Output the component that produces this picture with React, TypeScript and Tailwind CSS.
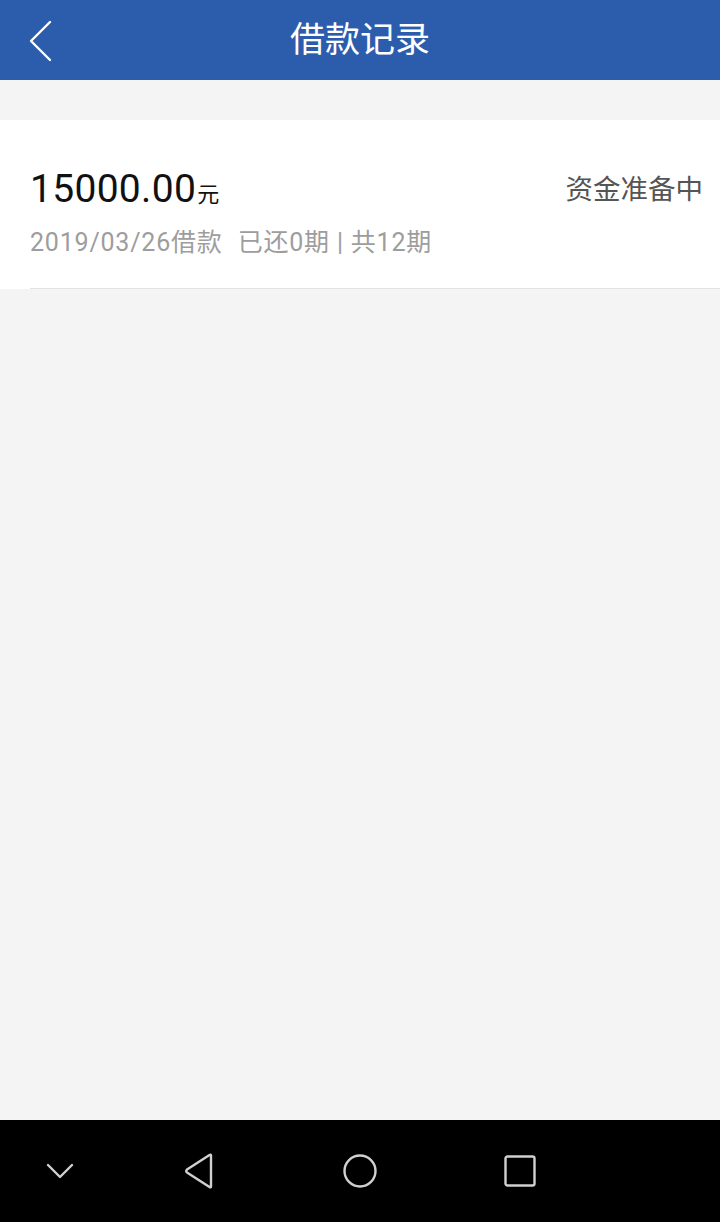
import React from "react";

const font = { fontFamily: 'Roboto, "Noto Sans CJK SC", sans-serif' };

function BackIcon() {
  return (
    <svg width="30" height="44" viewBox="0 0 30 44" fill="none">
      <polyline points="21,3 2,22 21,41" stroke="#fff" strokeWidth="2.4" strokeLinecap="round" strokeLinejoin="round" />
    </svg>
  );
}

function NavBar() {
  return (
    <div className="flex h-[102px] w-full items-center bg-black">
      <div className="flex w-[120px] justify-center">
        <svg width="28" height="18" viewBox="0 0 28 18" fill="none">
          <polyline points="2,3 14,15 26,3" stroke="#d0d0d0" strokeWidth="2.4" strokeLinecap="round" strokeLinejoin="round" />
        </svg>
      </div>
      <div className="flex w-[160px] justify-center">
        <svg width="32" height="36" viewBox="0 0 32 36" fill="none">
          <path d="M27 2.5 L27 33.5 Q27 35 25.5 34 L3 19.5 Q1.5 18 3 16.5 L25.5 2 Q27 1 27 2.5 Z" stroke="#d0d0d0" strokeWidth="2.4" strokeLinejoin="round" />
        </svg>
      </div>
      <div className="flex w-[160px] justify-center">
        <svg width="36" height="36" viewBox="0 0 36 36" fill="none">
          <circle cx="18" cy="18" r="15.5" stroke="#d0d0d0" strokeWidth="2.4" />
        </svg>
      </div>
      <div className="flex w-[160px] justify-center">
        <svg width="34" height="34" viewBox="0 0 34 34" fill="none">
          <rect x="2.5" y="2.5" width="29" height="29" rx="2" stroke="#d0d0d0" strokeWidth="2.4" />
        </svg>
      </div>
    </div>
  );
}

export default function App() {
  return (
    <div className="flex h-[1222px] w-[720px] flex-col bg-[#f4f4f4]" style={font}>
      <div className="grid h-[80px] grid-cols-[120px_1fr_120px] items-center bg-[#2c5dac]">
        <div className="flex pl-[29px] pt-[1px]">
          <BackIcon />
        </div>
        <div className="text-center text-[35px] leading-none text-white">借款记录</div>
        <div />
      </div>

      <div className="flex-1 pt-[40px]">
        <div className="bg-white">
          <div className="pl-[30px] pr-[17px] pt-[50px] pb-[33px]">
            <div className="flex h-[39px] items-center justify-between">
              <div className="flex items-baseline text-[#111]">
                <span className="text-[39px] leading-[39px] tracking-[0.3px]">15000.00</span>
                <span className="ml-[1px] text-[22px] leading-none">元</span>
              </div>
              <span className="text-[27.5px] leading-none text-[#555]">资金准备中</span>
            </div>
            <div className="mt-[21px] flex text-[25px] leading-[25px] tracking-[0.8px] text-[#9d9d9d]">
              <span>2019/03/26借款</span>
              <span className="ml-[15px]">已还0期 | 共12期</span>
            </div>
          </div>
          <div className="ml-[30px] h-px bg-[#e2e2e2]" />
        </div>
      </div>

      <NavBar />
    </div>
  );
}
